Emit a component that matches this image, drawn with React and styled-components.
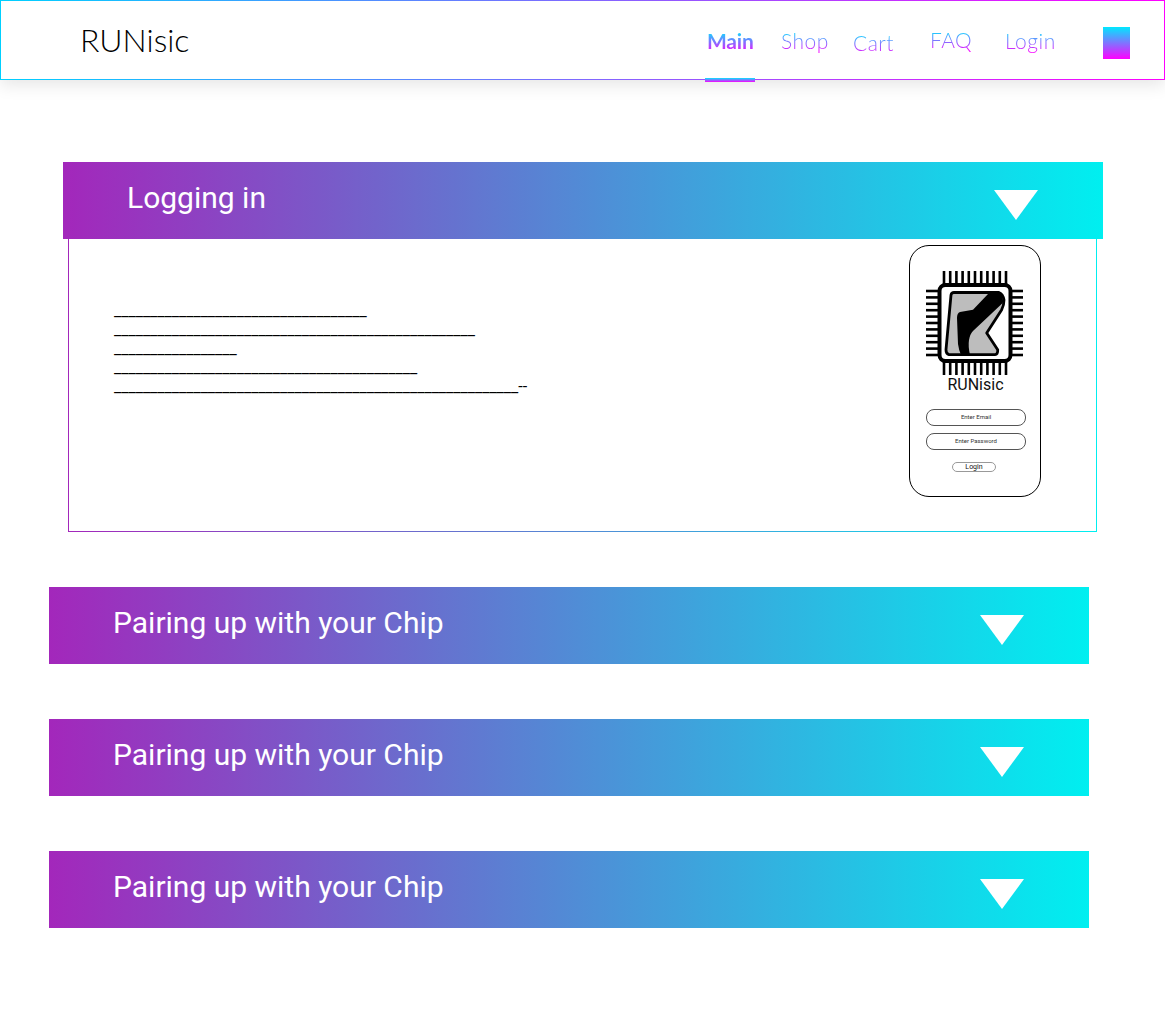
import styled, { createGlobalStyle } from "styled-components";

const Global = createGlobalStyle`
  body {
    margin: 0;
    background: #fff;
    font-family: Roboto, "Liberation Sans", sans-serif;
  }
`;

const barGradient = "linear-gradient(90deg, #a327bb 0%, #00eff0 100%)";
const navGradient = "linear-gradient(180deg, #00e8ff 0%, #ff00ff 100%)";
const navTextGradient = "linear-gradient(180deg, #00e8ff 12%, #ff00ff 100%)";

const links = [
  { label: "Main", width: 74, active: true },
  { label: "Shop", width: 72 },
  { label: "Cart", width: 77, shift: 4 },
  { label: "FAQ", width: 75, shift: -2 },
  { label: "Login", width: 98 },
];

const textLines = [35, 50, 17, 42, 56];

function ChipLogo() {
  const pins = [0, 1, 2, 3, 4, 5, 6, 7, 8, 9, 10];
  return (
    <svg width="100" height="110" viewBox="0 0 100 110" style={{ display: "block" }}>
      {pins.map((i) => (
        <g key={i} stroke="#000" strokeWidth="2.6">
          <line x1={19 + i * 6.2} y1="3" x2={19 + i * 6.2} y2="16" />
          <line x1={19 + i * 6.2} y1="94" x2={19 + i * 6.2} y2="107" />
          <line x1="1" y1={23 + i * 6.4} x2="14" y2={23 + i * 6.4} />
          <line x1="86" y1={23 + i * 6.4} x2="98" y2={23 + i * 6.4} />
        </g>
      ))}
      <rect x="14.5" y="17" width="71" height="76" rx="6" fill="#fff" stroke="#000" strokeWidth="4" />
      <path
        d="M29 24.5 L74 24.5 Q78 26 79 32 Q79 37 76.7 41.7 L61.7 65 L72.7 81.7 Q73 86.5 70 86.7 L24 86.7 Q21 86 21 81.7 L26 27 Q26.5 24.5 29 24.5 Z"
        fill="#bdbdbd"
        stroke="#000"
        strokeWidth="2.8"
        strokeLinejoin="round"
      />
      <path
        d="M75 25 L63 26 L48 41.7 L35 44 Q32 45 32 50 L33 76 Q34 83 36 87 L45 87 Q43 78 44 72 Q45 66 48 63 L77.7 35 Q79 30 75 25 Z"
        fill="#000"
      />
    </svg>
  );
}

function Phone() {
  return (
    <PhoneFrame>
      <ChipLogo />
      <PhoneTitle>RUNisic</PhoneTitle>
      <PhoneInput>Enter Email</PhoneInput>
      <PhoneInput>Enter Password</PhoneInput>
      <PhoneButton>Login</PhoneButton>
    </PhoneFrame>
  );
}

function Bar({ title, $left }) {
  return (
    <AccordionBar $left={$left}>
      <BarTitle>{title}</BarTitle>
      <Arrow />
    </AccordionBar>
  );
}

export default function App() {
  return (
    <Page>
      <Global />
      <Navbar>
        <Brand>RUNisic</Brand>
        <NavLinks>
          {links.map((l) => (
            <NavLink key={l.label} $width={l.width} $active={l.active} $shift={l.shift}>
              <span>{l.label}</span>
            </NavLink>
          ))}
          <NavSwatch />
        </NavLinks>
      </Navbar>
      <Content>
        <FirstSection>
          <Bar title="Logging in" $left={63} />
          <Panel>
            <PanelText>
              {textLines.map((n, i) => (
                <div key={i}>
                  {"_".repeat(n)}
                  {i === textLines.length - 1 ? "--" : ""}
                </div>
              ))}
            </PanelText>
            <Phone />
          </Panel>
        </FirstSection>
        <Bar title="Pairing up with your Chip" $left={49} />
        <Bar title="Pairing up with your Chip" $left={49} />
        <Bar title="Pairing up with your Chip" $left={49} />
      </Content>
    </Page>
  );
}

const Page = styled.div`
  min-height: 1016px;
  background: #fff;
`;

const Navbar = styled.header`
  box-sizing: border-box;
  height: 80px;
  display: flex;
  align-items: center;
  justify-content: space-between;
  padding: 0 34px 0 79px;
  border: 1px solid;
  border-image: linear-gradient(90deg, #00d0ff, #ff00ff) 1;
  box-shadow: 0 5px 16px rgba(0, 0, 0, 0.1);
  font-family: Lato, "Open Sans", sans-serif;
`;

const Brand = styled.div`
  margin-bottom: 2px;
  font-size: 32px;
  font-weight: 300;
  color: #000;
`;

const NavLinks = styled.nav`
  display: flex;
  align-items: center;
`;

const NavLink = styled.a`
  position: relative;
  width: ${(p) => p.$width}px;
  margin-top: ${(p) => p.$shift || 0}px;
  font-size: 21px;
  font-weight: ${(p) => (p.$active ? 700 : 300)};
  letter-spacing: ${(p) => (p.$active ? -0.2 : 0.5)}px;

  span {
    background: ${navTextGradient};
    -webkit-background-clip: text;
    background-clip: text;
    color: transparent;
  }

  ${(p) =>
    p.$active &&
    `
    &::after {
      content: "";
      position: absolute;
      left: -2px;
      bottom: -29px;
      width: 50px;
      height: 4px;
      background: ${navGradient};
    }
  `}
`;

const NavSwatch = styled.div`
  width: 27px;
  height: 32px;
  margin-top: 6px;
  background: ${navGradient};
`;

const Content = styled.main`
  padding-top: 82px;
  display: flex;
  flex-direction: column;
  gap: 55px;
`;

const FirstSection = styled.section`
  display: flex;
  flex-direction: column;
`;

const AccordionBar = styled.div`
  box-sizing: border-box;
  width: 1040px;
  height: 77px;
  margin-left: ${(p) => p.$left}px;
  padding: 0 65px 0 64px;
  display: flex;
  align-items: center;
  justify-content: space-between;
  background: ${barGradient};
`;

const BarTitle = styled.h2`
  margin: 0 0 7px;
  font-family: Roboto, sans-serif;
  font-size: 30px;
  font-weight: 400;
  color: #fff;
`;

const Arrow = styled.div`
  width: 44px;
  height: 30px;
  margin-top: 9px;
  background: #fff;
  clip-path: polygon(0 0, 100% 0, 50% 100%);
`;

const Panel = styled.div`
  box-sizing: border-box;
  width: 1029px;
  height: 293px;
  margin-left: 68px;
  padding: 6px 55px 0 45px;
  display: flex;
  justify-content: space-between;
  align-items: flex-start;
  border: 1px solid;
  border-top: none;
  border-image: linear-gradient(90deg, #a327bb, #00eff0) 1;
`;

const PanelText = styled.div`
  margin-top: 56px;
  font-family: Roboto, sans-serif;
  font-size: 16px;
  line-height: 19px;
  color: #000;
`;

const PhoneFrame = styled.div`
  box-sizing: border-box;
  width: 132px;
  height: 252px;
  padding-top: 22px;
  display: flex;
  flex-direction: column;
  align-items: center;
  border: 1px solid #000;
  border-radius: 20px;
`;

const PhoneTitle = styled.div`
  margin: -2px 0 15px 1px;
  font-family: Roboto, sans-serif;
  font-size: 16px;
  line-height: 18px;
  color: #111;
`;

const PhoneInput = styled.div`
  box-sizing: border-box;
  width: 100px;
  height: 17px;
  margin: 0 0 7px 2px;
  border: 1px solid #555;
  border-radius: 8px;
  font-family: Roboto, sans-serif;
  font-size: 6px;
  line-height: 14px;
  text-align: center;
  color: #333;
`;

const PhoneButton = styled.div`
  box-sizing: border-box;
  width: 44px;
  height: 10px;
  margin: 5px 0 0 -2px;
  border: 1px solid #999;
  border-radius: 5px;
  font-family: Roboto, sans-serif;
  font-size: 7px;
  line-height: 8px;
  text-align: center;
  color: #111;
`;
